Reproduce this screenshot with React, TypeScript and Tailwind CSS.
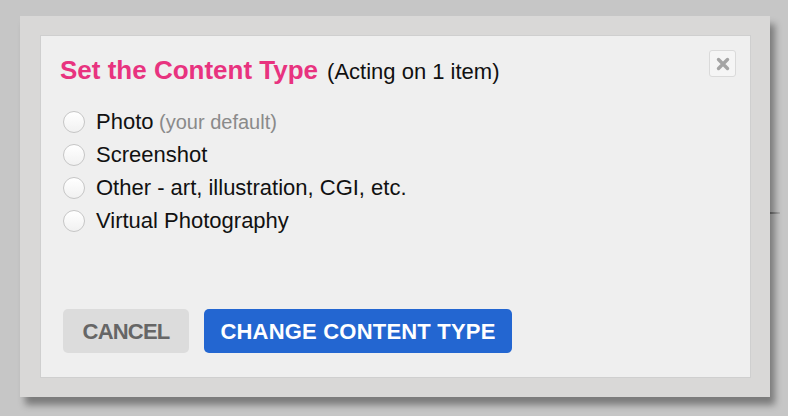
import { useState } from "react";

const OPTIONS = [
  { id: "photo", label: "Photo", note: "(your default)" },
  { id: "screenshot", label: "Screenshot" },
  { id: "other", label: "Other - art, illustration, CGI, etc." },
  { id: "virtual", label: "Virtual Photography" },
];

export default function App() {
  const [selected, setSelected] = useState<string | null>(null);

  return (
    <div
      className="relative h-[416px] w-full overflow-hidden bg-[#c6c6c6] pl-[20px] pt-[16px]"
      style={{ fontFamily: '"Liberation Sans", Arial, Helvetica, sans-serif' }}
    >
      {/* page content peeking out behind the modal */}
      <div className="absolute left-[770px] top-[212px] h-[2px] w-[10px] bg-gradient-to-r from-[#7a7a7a] to-[#b0b0b0]" />

      {/* Modal frame */}
      <div className="relative w-[750px] h-[381px] bg-[#d9d8d7] pt-[19px] pb-[19px] pl-[20px] pr-[19px] shadow-[5px_8px_7px_rgba(0,0,0,0.38)]">
        <div className="relative h-full border border-[#cfcfcf] bg-[#efefef] px-[19px] pt-[19px]">
          {/* Close */}
          <button className="absolute right-[14px] top-[14px] flex h-[27px] w-[27px] items-center justify-center rounded-[3px] border border-[#dadada] bg-[#f5f5f5]">
            <svg width="14" height="14" viewBox="0 0 14 14" aria-hidden="true">
              <path
                d="M2.5 2.5l9 9M11.5 2.5l-9 9"
                stroke="#a4a4a4"
                strokeWidth="3.4"
                strokeLinecap="round"
              />
            </svg>
          </button>

          <h2 className="h-[30px] leading-[30px] whitespace-nowrap">
            <span className="text-[26px] font-bold text-[#e8337f]">Set the Content Type</span>
            <span className="ml-[9px] text-[22px] text-[#111]">(Acting on 1 item)</span>
          </h2>

          {/* Options */}
          <div className="mt-[20px] flex flex-col">
            {OPTIONS.map((o) => (
              <label
                key={o.id}
                onClick={() => setSelected(o.id)}
                className="flex h-[33px] cursor-pointer items-center gap-[11px] pl-[3px]"
              >
                <span className="flex h-[22px] w-[22px] shrink-0 items-center justify-center rounded-full border border-[#c6c6c6] bg-gradient-to-b from-white to-[#f1f1f1]">
                  {selected === o.id && <span className="h-[10px] w-[10px] rounded-full bg-[#2366d1]" />}
                </span>
                <span className="text-[22px] leading-[33px] text-[#111] whitespace-nowrap">
                  {o.label}
                  {o.note && <span className="text-[20px] text-[#8a8a8a]"> {o.note}</span>}
                </span>
              </label>
            ))}
          </div>

          {/* Actions */}
          <div className="mt-[72px] flex gap-[15px] pl-[3px]">
            <button className="flex h-[44px] w-[126px] items-center justify-center rounded-[5px] bg-[#dcdcdc] text-[22px] font-bold tracking-[-0.8px] text-[#666]">
              CANCEL
            </button>
            <button className="flex h-[44px] w-[308px] items-center justify-center rounded-[5px] bg-[#2366d1] text-[22px] font-bold tracking-[0.2px] text-white">
              CHANGE CONTENT TYPE
            </button>
          </div>
        </div>
      </div>
    </div>
  );
}
